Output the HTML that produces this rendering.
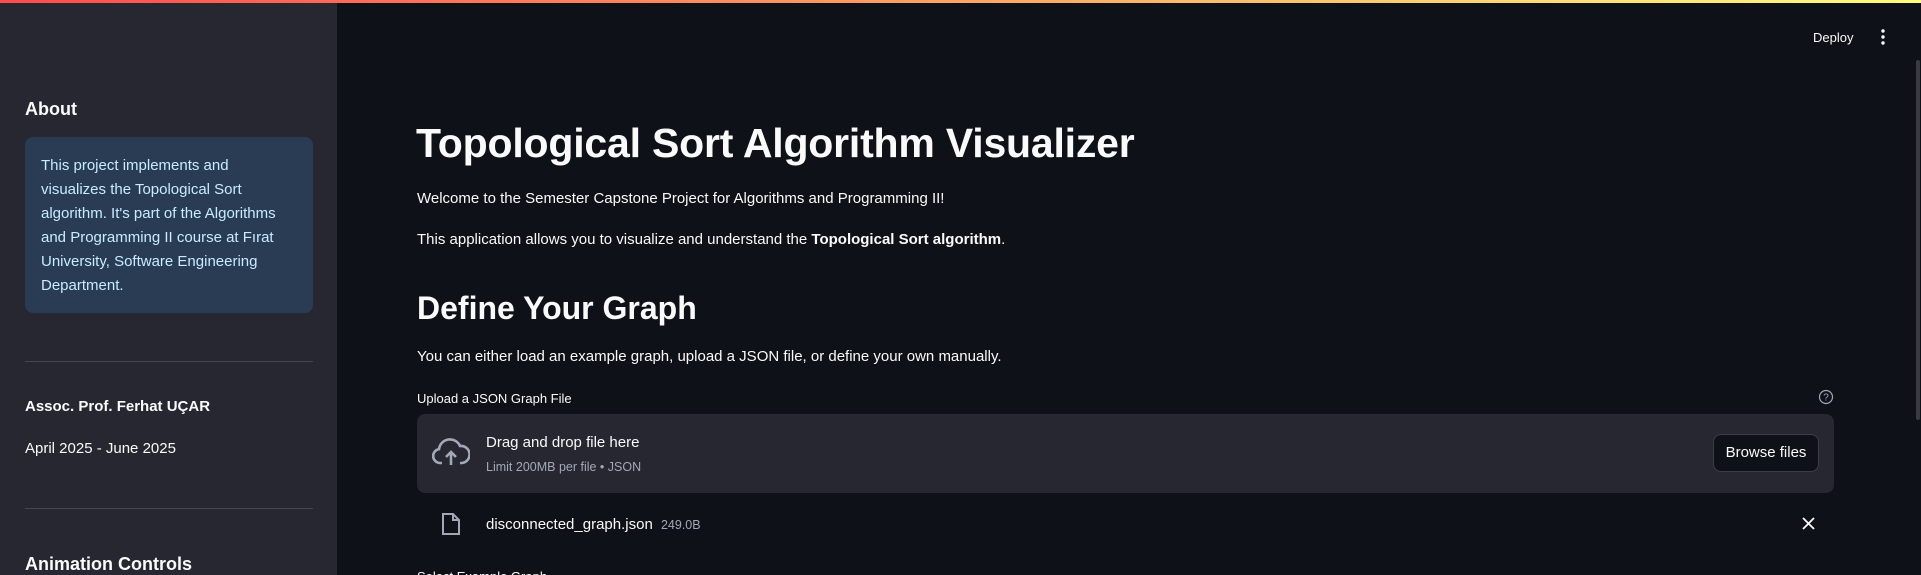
<!DOCTYPE html>
<html><head><meta charset="utf-8"><style>
*{margin:0;padding:0;box-sizing:border-box}
html,body{width:1921px;height:575px;overflow:hidden}
body{background:#0e1117;font-family:"Liberation Sans",sans-serif;color:#fafafa;position:relative}
.top{position:absolute;left:0;top:0;width:1921px;height:3px;background:linear-gradient(90deg,#ff4b4b,#fffd80)}
.side{position:absolute;left:0;top:0;width:337px;height:575px;background:#262730}
.a{position:absolute;white-space:nowrap}
.box{position:absolute;left:25px;top:137px;width:288px;height:176px;background:#293c54;border-radius:8px;padding:17px 16px;color:#c7ebff;font-size:15px;line-height:24px}
.hr{position:absolute;left:25px;width:288px;height:1px;background:#45464f}
.drop{position:absolute;left:417px;top:414px;width:1417px;height:79px;background:#262730;border-radius:8px}
.btn{position:absolute;left:1713px;top:434px;width:106px;height:38px;border:1px solid #3c3e47;border-radius:8px;background:#0e1117;font-size:15px;text-align:center;line-height:36px}
</style></head><body>
<div class="side"></div>
<div class="top"></div>
<div class="a" style="left:25px;top:99px;font-size:18px;font-weight:bold">About</div>
<div class="box">This project implements and visualizes the Topological Sort algorithm. It's part of the Algorithms and Programming II course at Fırat University, Software Engineering Department.</div>
<div class="hr" style="top:361px"></div>
<div class="a" style="left:25px;top:398px;font-size:15px;font-weight:bold">Assoc. Prof. Ferhat UÇAR</div>
<div class="a" style="left:25px;top:440px;font-size:15px">April 2025 - June 2025</div>
<div class="hr" style="top:508px"></div>
<div class="a" style="left:25px;top:554px;font-size:18px;font-weight:bold">Animation Controls</div>

<div class="a" style="left:1813px;top:30px;font-size:13px">Deploy</div>
<svg class="a" style="left:1878px;top:29px" width="10" height="16"><circle cx="5" cy="2" r="1.7" fill="#fafafa"/><circle cx="5" cy="8" r="1.7" fill="#fafafa"/><circle cx="5" cy="14" r="1.7" fill="#fafafa"/></svg>
<div class="a" style="left:1916px;top:60px;width:4px;height:360px;background:#3a3b42;border-radius:2px"></div>

<div class="a" style="left:416px;top:120px;font-size:41px;font-weight:bold;letter-spacing:-0.2px">Topological Sort Algorithm Visualizer</div>
<div class="a" style="left:417px;top:190px;font-size:15px">Welcome to the Semester Capstone Project for Algorithms and Programming II!</div>
<div class="a" style="left:417px;top:231px;font-size:15px">This application allows you to visualize and understand the <b>Topological Sort algorithm</b>.</div>
<div class="a" style="left:417px;top:290px;font-size:32px;font-weight:bold">Define Your Graph</div>
<div class="a" style="left:417px;top:348px;font-size:15px">You can either load an example graph, upload a JSON file, or define your own manually.</div>
<div class="a" style="left:417px;top:391px;font-size:13px">Upload a JSON Graph File</div>
<svg class="a" style="left:1818px;top:389px" width="16" height="16"><circle cx="8" cy="8" r="6.5" fill="none" stroke="#a3a8b8" stroke-width="1.2"/><text x="8" y="11.5" font-size="10" text-anchor="middle" fill="#a3a8b8" font-family="Liberation Sans">?</text></svg>
<div class="drop"></div>
<svg class="a" style="left:432px;top:437px" width="38" height="30" viewBox="0 0 38 30"><path d="M10 26H8a7 7 0 0 1-1-13.9A11 11 0 0 1 28 9a8 8 0 0 1 2 17h-2" fill="none" stroke="#a3a8b8" stroke-width="2.6"/><path d="M19 28V16M14 20l5-5 5 5" fill="none" stroke="#a3a8b8" stroke-width="2.6"/></svg>
<div class="a" style="left:486px;top:434px;font-size:15px">Drag and drop file here</div>
<div class="a" style="left:486px;top:460px;font-size:12.5px;color:#a3a8b8">Limit 200MB per file • JSON</div>
<div class="btn">Browse files</div>
<svg class="a" style="left:441px;top:512px" width="20" height="24" viewBox="0 0 20 24"><path d="M2 2h10l6 6v14H2z" fill="none" stroke="#a3a8b8" stroke-width="2"/><path d="M12 2v6h6" fill="none" stroke="#a3a8b8" stroke-width="2"/></svg>
<div class="a" style="left:486px;top:516px;font-size:15px">disconnected_graph.json <span style="font-size:12.5px;color:#a3a8b8;margin-left:4px">249.0B</span></div>
<svg class="a" style="left:1802px;top:517px" width="13" height="13"><path d="M1 1l11 11M12 1L1 12" stroke="#fafafa" stroke-width="1.8"/></svg>
<div class="a" style="left:417px;top:569px;font-size:13px">Select Example Graph</div>
</body></html>
